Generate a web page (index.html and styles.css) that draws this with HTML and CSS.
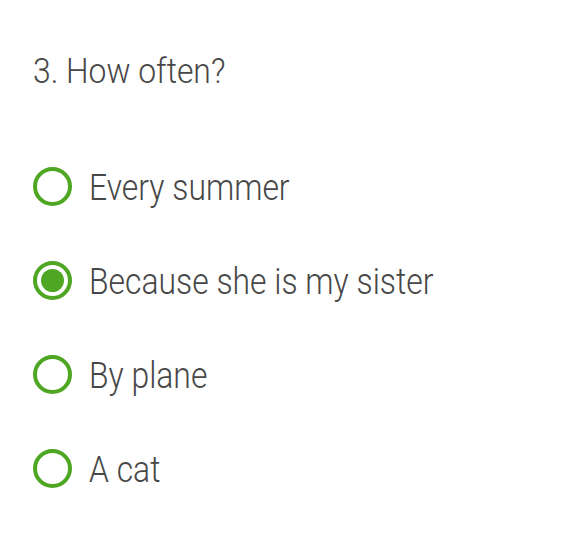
FILE: index.html
```html
<!DOCTYPE html>
<html>
<head>
<meta charset="utf-8">
<link rel="stylesheet" href="styles.css">
</head>
<body>
<div class="quiz">
  <div class="question">3. How often?</div>
  <div class="options">
    <label class="option"><span class="radio"></span><span class="label">Every summer</span></label>
    <label class="option"><span class="radio checked"></span><span class="label">Because she is my sister</span></label>
    <label class="option"><span class="radio"></span><span class="label">By plane</span></label>
    <label class="option"><span class="radio"></span><span class="label">A cat</span></label>
  </div>
</div>
</body>
</html>
```
FILE: styles.css
```css
html, body {
  margin: 0;
  padding: 0;
  background: #ffffff;
}
body {
  font-family: Roboto, "Liberation Sans", sans-serif;
  font-weight: 300;
  color: #474747;
}
.quiz {
  padding: 50px 0 0 33px;
}
.question {
  font-size: 35px;
  line-height: 44px;
  height: 44px;
  transform: scaleX(0.91);
  transform-origin: left center;
}
.options {
  display: flex;
  flex-direction: column;
  gap: 55px;
  margin-top: 73px;
}
.option {
  display: flex;
  align-items: center;
  height: 39px;
}
.radio {
  box-sizing: border-box;
  width: 39px;
  height: 39px;
  border-radius: 50%;
  border: 4px solid #4ea623;
  flex: none;
  position: relative;
}
.radio.checked::after {
  content: "";
  position: absolute;
  left: 4px;
  top: 4px;
  width: 23px;
  height: 23px;
  border-radius: 50%;
  background: #4ea623;
}
.label {
  margin-left: 17px;
  font-size: 36px;
  line-height: 44px;
  transform: scaleX(0.885);
  transform-origin: left center;
  white-space: nowrap;
  position: relative;
  top: 1px;
}
```
